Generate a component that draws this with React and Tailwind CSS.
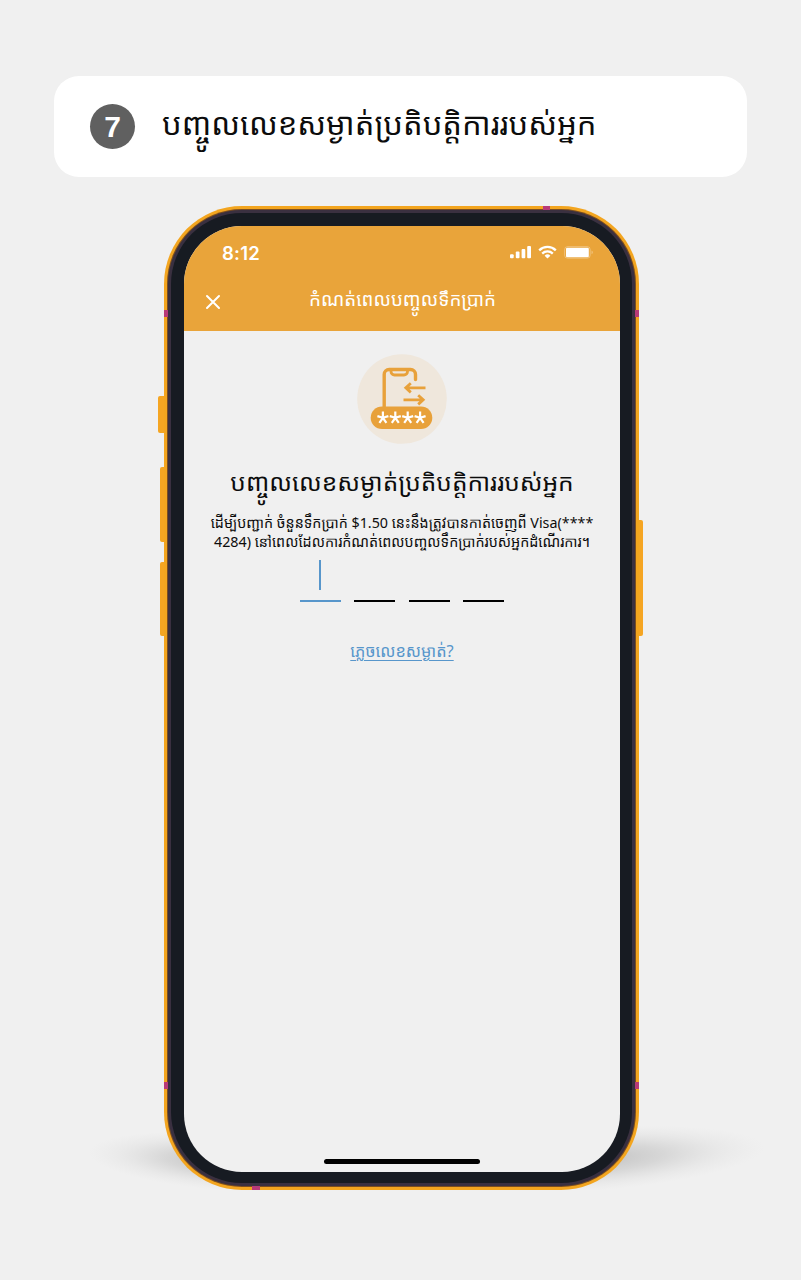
const khmer = "font-['Noto_Sans_Khmer','Noto_Sans',sans-serif]";

function StatusIcons() {
  return (
    <svg width="84" height="16" viewBox="0 0 84 16" fill="#fff">
      <rect x="0" y="9.3" width="3.7" height="4" rx="1" />
      <rect x="5.8" y="6.6" width="3.7" height="6.7" rx="1" />
      <rect x="11.6" y="3.9" width="3.7" height="9.4" rx="1" />
      <rect x="17.2" y="1" width="3.8" height="12.3" rx="1" />
      <g fill="none" stroke="#fff" strokeWidth="2.3">
        <path d="M29.2 5.3a12 12 0 0 1 16.6 0" />
        <path d="M32.2 8.6a7.6 7.6 0 0 1 10.6 0" />
      </g>
      <path d="M34.6 10.7a4.2 4.2 0 0 1 5.8 0L37.5 13.6z" />
      <rect x="54.6" y="1.6" width="25.6" height="11.6" rx="3" fill="none" stroke="#fff" strokeOpacity="0.3" />
      <rect x="56" y="2.8" width="22.8" height="9.4" rx="1.3" />
      <path d="M81.6 5.5v3.8c1.5-.6 1.5-3.2 0-3.8z" opacity="0.4" />
    </svg>
  );
}

function PinIllustration() {
  return (
    <svg width="90" height="90" viewBox="0 0 90 90" className="shrink-0">
      <circle cx="45" cy="45" r="44.8" fill="#efe7dc" />
      <g fill="none" stroke="#e8a13a" strokeWidth="3.4">
        <path d="M27.2 54V20.5a5 5 0 0 1 5-5H53.5a5 5 0 0 1 5 5V25.5" strokeLinecap="round" />
        <path d="M34 16v1.5a3.5 3.5 0 0 0 3.5 3.5h9.5a3.5 3.5 0 0 0 3.5-3.5V16" strokeWidth="2.8" />
        <path d="M68.5 33.8H49M53.8 29.2l-5 4.6 5 4.6M46.5 45.8H66M61.2 41.2l5 4.6-5 4.6" strokeWidth="2.8" />
      </g>
      <rect x="13.7" y="52.5" width="61.6" height="22.6" rx="11.3" fill="#e8a13a" />
      <g stroke="#fff" strokeWidth="2.2">
        {[25.9, 38.3, 50.7, 63.1].map((x) => (
          <path key={x} d={`M${x} 63.8V57.6M${x} 63.8l5.5-1.7M${x} 63.8l3.5 5M${x} 63.8l-3.5 5M${x} 63.8l-5.5-1.7`} />
        ))}
      </g>
    </svg>
  );
}

function PhoneShadow() {
  return (
    <svg width="710" height="72" viewBox="0 0 710 72" className="absolute -left-[104px] top-[912px]">
      <defs>
        <radialGradient id="shade">
          <stop offset="0" stopColor="#999" stopOpacity="0.6" />
          <stop offset="0.45" stopColor="#aaa" stopOpacity="0.36" />
          <stop offset="0.75" stopColor="#bbb" stopOpacity="0.14" />
          <stop offset="1" stopColor="#ccc" stopOpacity="0" />
        </radialGradient>
      </defs>
      <ellipse cx="170" cy="44" rx="142" ry="29" fill="url(#shade)" transform="rotate(4 170 44)" />
      <ellipse cx="520" cy="42" rx="185" ry="32" fill="url(#shade)" transform="rotate(-4 520 42)" />
    </svg>
  );
}

export default function App() {
  return (
    <div className={`flex h-[1280px] w-[801px] flex-col overflow-hidden bg-[#f0f0f0] pt-[76px] text-[#0c0c0c] ${khmer}`}>
      <header className="ml-[54px] flex h-[101px] w-[693px] shrink-0 items-center rounded-[25px] bg-white pl-9">
        <div className="flex size-[45px] items-center justify-center rounded-full bg-[#606060] font-['Liberation_Sans',sans-serif] text-[30px] font-bold text-white">7</div>
        <h1 className="ml-[27px] whitespace-nowrap pb-[7px] text-[31px] leading-[48px]">បញ្ចូលលេខសម្ងាត់ប្រតិបត្តិការរបស់អ្នក</h1>
      </header>

      <div className="relative isolate ml-[164px] mt-[29px] h-[984px] w-[475px] shrink-0">
        <PhoneShadow />
        <i className="absolute -left-[6px] top-[190px] h-[37px] w-[10px] rounded-l-[2px] bg-[#f5a522]" />
        <i className="absolute -left-[4px] top-[261px] h-[75px] w-[8px] rounded-l-[2px] bg-[#f5a522]" />
        <i className="absolute -left-[4px] top-[356px] h-[74px] w-[8px] rounded-l-[2px] bg-[#f5a522]" />
        <i className="absolute -right-[4px] top-[314px] h-[116px] w-[8px] rounded-r-[2px] bg-[#f5a522]" />
        <div className="relative h-full rounded-[78px] bg-[#f3a51f] p-[3px]">
          <div className="h-full rounded-[75px] bg-[#7a4d20] p-px">
            <div className="h-full rounded-[74px] bg-[#3a3040] p-[3px]">
              <div className="h-full rounded-[71px] bg-[#171b22] p-[13px] pb-[11px]">
                <main className="flex h-full w-[436px] flex-col overflow-hidden rounded-[58px] bg-[#f0f0f0]">
                  <div className="h-[105px] shrink-0 bg-[#e9a43a] text-white">
                    <div className="flex h-[54px] items-center justify-between pl-[38px] pr-[26px]">
                      <span className="pb-px font-['Inter',sans-serif] text-[18.5px] font-semibold leading-6 tracking-[0.2px]">8:12</span>
                      <StatusIcons />
                    </div>
                    <div className="flex h-[44px] items-center">
                      <svg width="16" height="16" viewBox="0 0 16 16" className="ml-[21px]" stroke="#fff" strokeWidth="2" strokeLinecap="round"><path d="M2 2l12 12M14 2L2 14" /></svg>
                      <h2 className="flex-1 whitespace-nowrap pb-[6px] pr-[36px] text-center text-[18.8px] leading-8">កំណត់ពេលបញ្ចូលទឹកប្រាក់</h2>
                    </div>
                  </div>
                  <section className="flex flex-1 flex-col items-center pt-[23px]">
                    <PinIllustration />
                    <h3 className="mt-[20px] whitespace-nowrap text-[24.5px] leading-[36px]">បញ្ចូលលេខសម្ងាត់ប្រតិបត្តិការរបស់អ្នក</h3>
                    <p className="mt-[13px] whitespace-nowrap text-center text-[14.3px] leading-[19px]">
                      <span>ដើម្បីបញ្ជាក់ ចំនួនទឹកប្រាក់ $1.50 នេះនឹងត្រូវបានកាត់ចេញពី Visa(****</span><br />
                      <span>4284) នៅពេលដែលការកំណត់ពេលបញ្ចលទឹកប្រាក់របស់អ្នកដំណើរការ។</span>
                    </p>
                    <div className="mt-[9px] flex h-[42px] w-[205px] items-end justify-between">
                      <div className="flex h-full w-[41px] flex-col items-center justify-between">
                        <i className="h-[30px] w-[2px] bg-[#5796cb]" />
                        <i className="h-[2px] w-full bg-[#5796cb]" />
                      </div>
                      <i className="h-[2px] w-[41px] bg-black" />
                      <i className="h-[2px] w-[41px] bg-black" />
                      <i className="h-[2px] w-[41px] bg-black" />
                    </div>
                    <a className="mt-[37px] whitespace-nowrap text-[16.4px] leading-6 text-[#5796cb] underline decoration-1 underline-offset-[3px]">ភ្លេចលេខសម្ងាត់?</a>
                    <div className="mb-[8px] mt-auto h-[5px] w-[156px] rounded-full bg-black" />
                  </section>
                </main>
              </div>
            </div>
          </div>
          <i className="absolute left-[379px] top-0 h-[4px] w-[7px] bg-[#b83a78]" />
          <i className="absolute left-0 top-[104px] h-[7px] w-[4px] bg-[#b83a78]" />
          <i className="absolute right-0 top-[104px] h-[7px] w-[4px] bg-[#b83a78]" />
          <i className="absolute left-0 top-[876px] h-[7px] w-[4px] bg-[#b83a78]" />
          <i className="absolute right-0 top-[876px] h-[7px] w-[4px] bg-[#b83a78]" />
          <i className="absolute bottom-0 left-[88px] h-[4px] w-[8px] bg-[#b83a78]" />
        </div>
      </div>
    </div>
  );
}
